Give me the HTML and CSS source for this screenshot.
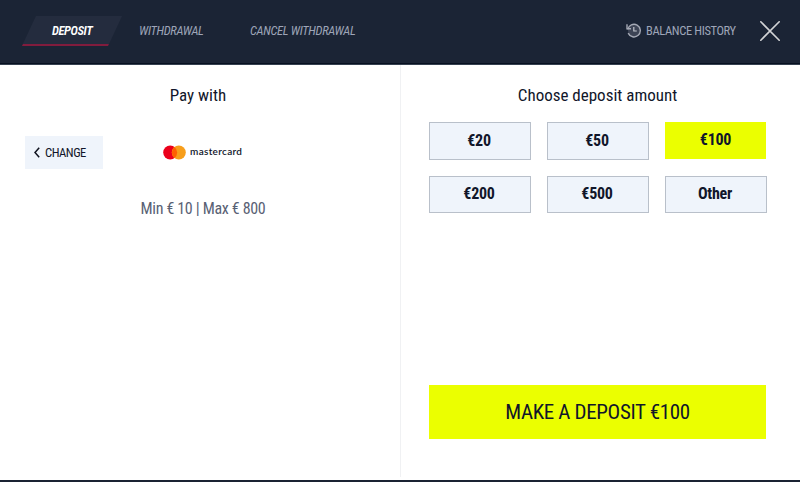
FILE: index.html
```html
<!DOCTYPE html>
<html lang="en">
<head>
<meta charset="utf-8">
<title>Deposit</title>
<link rel="stylesheet" href="styles.css">
</head>
<body>
<header class="topbar">
  <nav class="tabs">
    <a class="tab tab-active"><span>DEPOSIT</span></a>
    <a class="tab tab-withdrawal"><span>WITHDRAWAL</span></a>
    <a class="tab tab-cancel"><span>CANCEL WITHDRAWAL</span></a>
  </nav>
  <a class="history">
    <svg width="15" height="15" viewBox="0 0 15 15" fill="none">
      <circle cx="8" cy="7.5" r="6" fill="#3d4455"/>
      <path d="M1.8 6.4A6.3 6.3 0 1 1 2.2 10.1" stroke="#a5a9b5" stroke-width="1.4"/>
      <path d="M1 1.2v4.6h4" stroke="#a5a9b5" stroke-width="1.4"/>
      <path d="M7.8 4v4h3" stroke="#c0c3cb" stroke-width="1.2"/>
    </svg>
    <span>BALANCE HISTORY</span>
  </a>
  <svg class="close" width="20" height="20" viewBox="0 0 20 20"><path d="M.8.8l18.4 18.4M19.2.8L.8 19.2" stroke="#d2d3d6" stroke-width="1.6" stroke-linecap="round"/></svg>
</header>
<main class="content">
  <section class="method">
    <h2 class="title">Pay with</h2>
    <div class="method-row">
      <button class="change">
        <svg width="6" height="11" viewBox="0 0 6 11"><path d="M5.2.7L1 5.5l4.2 4.8" fill="none" stroke="#10131f" stroke-width="1.5"/></svg>
        <span>CHANGE</span>
      </button>
      <div class="card">
        <svg width="23" height="15" viewBox="0 0 23 15"><circle cx="7.2" cy="7.5" r="7" fill="#eb001b"/><circle cx="15.8" cy="7.5" r="7" fill="#f79e1b"/><path d="M11.5 2a7 7 0 0 1 0 11a7 7 0 0 1 0-11" fill="#ff5f00"/></svg>
        <span>mastercard</span>
      </div>
    </div>
    <p class="limits">Min € 10 | Max € 800</p>
  </section>
  <section class="amount">
    <h2 class="title">Choose deposit amount</h2>
    <div class="grid">
      <button class="option">€20</button>
      <button class="option">€50</button>
      <button class="option selected">€100</button>
      <button class="option">€200</button>
      <button class="option">€500</button>
      <button class="option">Other</button>
    </div>
    <button class="submit">MAKE A DEPOSIT €100</button>
  </section>
</main>
</body>
</html>
```
FILE: styles.css
```css
* { box-sizing: border-box; }
body {
  margin: 0;
  height: 482px;
  overflow: hidden;
  display: flex;
  flex-direction: column;
  background: #fff;
  border-bottom: 2px solid #1a2333;
  color: #11162a;
  font-family: "Roboto Condensed", Roboto, sans-serif;
  font-stretch: 75%;
  white-space: nowrap;
}
button { font: inherit; color: inherit; border: 0; padding: 0; }
.topbar {
  height: 65px;
  flex: none;
  display: flex;
  align-items: flex-start;
  padding: 16px 20px 0 22px;
  background: #1b2435;
  border-bottom: 1px solid #354050;
  box-shadow: inset 0 -1px #071020;
  color: #9ea5b8;
  font-size: 12.5px;
  line-height: 30px;
}
.tabs { display: flex; font-style: italic; font-weight: 400; letter-spacing: -.3px; }
.tab { height: 30px; }
.tab-active {
  width: 100px;
  padding-left: 30px;
  color: #fff;
  font-weight: 600;
  letter-spacing: -.38px;
  background: linear-gradient(#242c3e 28.5px, #811c3d 28.5px);
  clip-path: polygon(14px 0, 100% 0, 86px 100%, 0 100%);
}
.tab-withdrawal { margin-left: 17px; width: 111px; }
.history { display: flex; margin-left: auto; width: 134px; letter-spacing: -.37px; }
.history svg { margin: 7px 5px 0 0; }
.close { margin-top: 5px; }
.content { flex: 1; display: flex; }
.method { width: 401px; border-right: 1px solid #f0f1f3; padding: 0 24px 0 25px; margin-bottom: 3px; }
.title {
  margin: 0;
  padding: 18px 0 1px;
  font-size: 17px;
  font-weight: 400;
  line-height: 24px;
  text-align: center;
}
.method .title { padding-right: 5px; }
.method-row { display: flex; margin-top: 28px; }
.change {
  display: flex;
  align-items: center;
  gap: 5px;
  width: 78px;
  height: 33px;
  padding-left: 9px;
  background: #eff4fb;
  font-size: 12.6px;
  letter-spacing: -.5px;
}
.card { display: flex; align-items: center; margin-left: 60px; gap: 4px; padding-bottom: 1px; }
.card span { font: 600 10px/12px Lato, sans-serif; letter-spacing: .32px; padding-bottom: 2px; }
.limits { margin: 28px 0 0; padding-left: 5px; font-size: 16px; letter-spacing: -.33px; line-height: 24px; text-align: center; color: #596174; }
.amount { flex: 1; display: flex; flex-direction: column; padding: 0 33px 41px 28px; }
.amount .title { padding-right: 1px; }
.grid { display: grid; grid-template-columns: repeat(3, 102px); grid-template-rows: 38px 37px; gap: 16px; margin-top: 14px; }
.option { padding: 0 2px 2px 0; background: #eff4fb; border: 1px solid #b9c0ca; font-size: 16px; letter-spacing: -.25px; font-weight: 700; }
.selected { background: #ebff00; border-color: #ebff00; margin: 0 1px 1px 0; padding-right: 0; }
.submit { margin-top: auto; margin-right: 1px; height: 54px; background: #ebff00; font-size: 21px; letter-spacing: -.35px; }
```
